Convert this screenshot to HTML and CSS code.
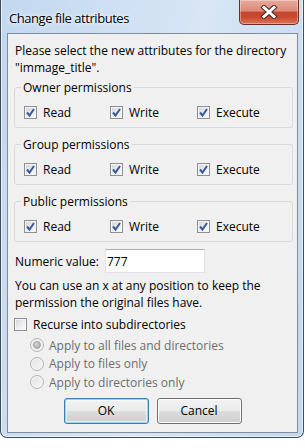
FILE: index.html
```html
<!DOCTYPE html>
<html lang="en">
<head>
    <meta charset="UTF-8">
    <title>Change file attributes</title>
    <link rel="stylesheet" href="styles.css">
</head>
<body>
    <div class="window">
        <div class="titlebar">
            <span class="title">Change file attributes</span>
            <button class="close" aria-label="Close">
                <svg width="18" height="14" viewBox="0 0 18 14">
                    <path d="M4 2.5 L14 11.5 M14 2.5 L4 11.5" stroke="#4a2a24" stroke-width="5" stroke-linecap="square" fill="none"/>
                    <path d="M4 2.5 L14 11.5 M14 2.5 L4 11.5" stroke="#ffffff" stroke-width="3" stroke-linecap="square" fill="none"/>
                </svg>
            </button>
        </div>

        <div class="client">
            <p class="intro">Please select the new attributes for the directory<br>"immage_title".</p>

            <fieldset class="perm-group">
                <legend>Owner permissions</legend>
                <div class="perm-row">
                    <label class="check"><span class="box"><svg width="11" height="11" viewBox="0 0 11 11"><path d="M2 5.5 L4.5 8.5 L9 2" /></svg></span>Read</label>
                    <label class="check"><span class="box"><svg width="11" height="11" viewBox="0 0 11 11"><path d="M2 5.5 L4.5 8.5 L9 2" /></svg></span>Write</label>
                    <label class="check"><span class="box"><svg width="11" height="11" viewBox="0 0 11 11"><path d="M2 5.5 L4.5 8.5 L9 2" /></svg></span>Execute</label>
                </div>
            </fieldset>

            <fieldset class="perm-group">
                <legend>Group permissions</legend>
                <div class="perm-row">
                    <label class="check"><span class="box"><svg width="11" height="11" viewBox="0 0 11 11"><path d="M2 5.5 L4.5 8.5 L9 2" /></svg></span>Read</label>
                    <label class="check"><span class="box"><svg width="11" height="11" viewBox="0 0 11 11"><path d="M2 5.5 L4.5 8.5 L9 2" /></svg></span>Write</label>
                    <label class="check"><span class="box"><svg width="11" height="11" viewBox="0 0 11 11"><path d="M2 5.5 L4.5 8.5 L9 2" /></svg></span>Execute</label>
                </div>
            </fieldset>

            <fieldset class="perm-group">
                <legend>Public permissions</legend>
                <div class="perm-row">
                    <label class="check"><span class="box"><svg width="11" height="11" viewBox="0 0 11 11"><path d="M2 5.5 L4.5 8.5 L9 2" /></svg></span>Read</label>
                    <label class="check"><span class="box"><svg width="11" height="11" viewBox="0 0 11 11"><path d="M2 5.5 L4.5 8.5 L9 2" /></svg></span>Write</label>
                    <label class="check"><span class="box"><svg width="11" height="11" viewBox="0 0 11 11"><path d="M2 5.5 L4.5 8.5 L9 2" /></svg></span>Execute</label>
                </div>
            </fieldset>

            <div class="numeric-row">
                <label class="numeric-label" for="numeric">Numeric value:</label>
                <input class="numeric" id="numeric" type="text" value="777">
            </div>

            <p class="hint">You can use an x at any position to keep the<br>permission the original files have.</p>

            <label class="check recurse"><span class="box"></span>Recurse into subdirectories</label>

            <div class="radios">
                <label class="radio"><span class="dot selected"></span>Apply to all files and directories</label>
                <label class="radio"><span class="dot"></span>Apply to files only</label>
                <label class="radio"><span class="dot"></span>Apply to directories only</label>
            </div>

            <div class="buttons">
                <button class="btn btn-default">OK</button>
                <button class="btn">Cancel</button>
            </div>
        </div>
    </div>
</body>
</html>
```
FILE: styles.css
```css
body {
    margin: 0;
    background-color: #ffffff;
    font-family: 'Open Sans', 'Noto Sans', sans-serif;
    font-size: 12px;
    color: #000;
}

/* Aero window frame */
.window {
    width: 304px;
    height: 438px;
    box-sizing: border-box;
    display: flex;
    flex-direction: column;
    padding: 0 5px 4px 6px;
    border: 1px solid #3d4d5e;
    border-top: none;
    border-radius: 0 0 7px 7px;
    background: linear-gradient(100deg, #c2d8ef 0%, #d8e6f5 55%, #c2d8f0 100%);
    box-shadow: inset 1px 0 0 rgba(255, 255, 255, 0.6), inset -1px 0 0 rgba(255, 255, 255, 0.6), inset 0 -1px 0 rgba(255, 255, 255, 0.6);
}

.titlebar {
    height: 33px;
    display: flex;
    justify-content: space-between;
    align-items: flex-start;
    flex-shrink: 0;
}

.title {
    padding: 8px 0 0 2px;
    font-size: 13px;
    letter-spacing: -0.45px;
    line-height: 20px;
    text-shadow: 0 0 6px #ffffff, 0 0 3px #ffffff;
}

.close {
    width: 60px;
    height: 25px;
    margin-right: -1px;
    padding: 0;
    display: flex;
    align-items: center;
    justify-content: center;
    border: 1px solid #6b2c24;
    border-top: none;
    border-radius: 0 0 5px 5px;
    background: linear-gradient(#e8aa9c 0%, #dc8b78 45%, #c5452f 52%, #c84a33 72%, #dc7556 100%);
    box-shadow: inset 0 0 0 1px rgba(255, 255, 255, 0.35);
}

/* Dialog client area */
.client {
    flex: 1;
    background-color: #f0f0f0;
    border: 1px solid #838d99;
    padding: 8px 4px 0 6px;
}

.intro,
.hint {
    margin: 0 0 0 1px;
    line-height: 17px;
}

.intro {
    margin-bottom: 3px;
}

/* Permission group boxes */
.perm-group {
    margin: 0;
    padding: 0 0 6px 9px;
    border: 1px solid #d5dadf;
    border-radius: 3px;
}

.perm-group + .perm-group {
    margin-top: 8px;
}

.perm-group legend {
    margin-left: -3px;
    padding: 0 2px;
    line-height: 17px;
}

.perm-row {
    margin-top: 8px;
    display: grid;
    grid-template-columns: 86px 87px 1fr;
}

.check {
    display: flex;
    align-items: center;
    gap: 6px;
    line-height: 17px;
}

.box {
    width: 11px;
    height: 11px;
    border: 1px solid #8e8f8f;
    background: linear-gradient(135deg, #cfd3d8 0%, #eef0f2 60%, #f8f8f8 100%);
    box-shadow: inset 0 0 0 1px #f4f4f4;
    display: flex;
}

.box path {
    fill: none;
    stroke: #3b5a98;
    stroke-width: 2;
}

.numeric-row {
    margin-top: 7px;
    display: flex;
    align-items: center;
}

.numeric-label {
    width: 91px;
    padding-left: 1px;
    box-sizing: border-box;
}

.numeric {
    width: 100px;
    height: 24px;
    box-sizing: border-box;
    margin: 0;
    padding: 0 1px;
    border: 1px solid #e2e3ea;
    border-top-color: #abadb3;
    background: #ffffff;
    font-family: inherit;
    font-size: 12px;
    color: #000;
    outline: none;
}

.hint {
    margin-top: 4px;
}

.recurse {
    margin-top: 5px;
}

/* Disabled radio group */
.radios {
    margin: 3px 0 0 16px;
}

.radio {
    display: flex;
    align-items: center;
    gap: 5px;
    height: 18.5px;
    color: #6d6d6d;
}

.dot {
    width: 12px;
    height: 12px;
    border: 1px solid #b4b4b4;
    border-radius: 50%;
    background: linear-gradient(135deg, #e2e2e2, #f8f8f8);
    box-shadow: inset 0 0 0 1px #f6f6f6;
    display: flex;
    align-items: center;
    justify-content: center;
}

.dot.selected::after {
    content: '';
    width: 6px;
    height: 6px;
    border-radius: 50%;
    background: radial-gradient(circle at 40% 35%, #d8d8d8, #9c9c9c);
    border: 1px solid #a8a8a8;
}

/* Push buttons */
.buttons {
    margin-top: 6px;
    display: flex;
    justify-content: center;
    gap: 8px;
    padding-right: 2px;
}

.btn {
    width: 85px;
    height: 26px;
    padding: 0;
    border: 1px solid #707070;
    border-radius: 3px;
    background: linear-gradient(#f2f2f2 0%, #ebebeb 50%, #dddddd 51%, #cfcfcf 100%);
    box-shadow: inset 0 0 0 1px #fcfcfc;
    font-family: inherit;
    font-size: 12px;
    color: #000;
}

.btn-default {
    border-color: #3c7fb1;
    box-shadow: inset 0 0 0 1px #8fd6f4, inset 0 0 0 2px rgba(255, 255, 255, 0.6);
}
```
